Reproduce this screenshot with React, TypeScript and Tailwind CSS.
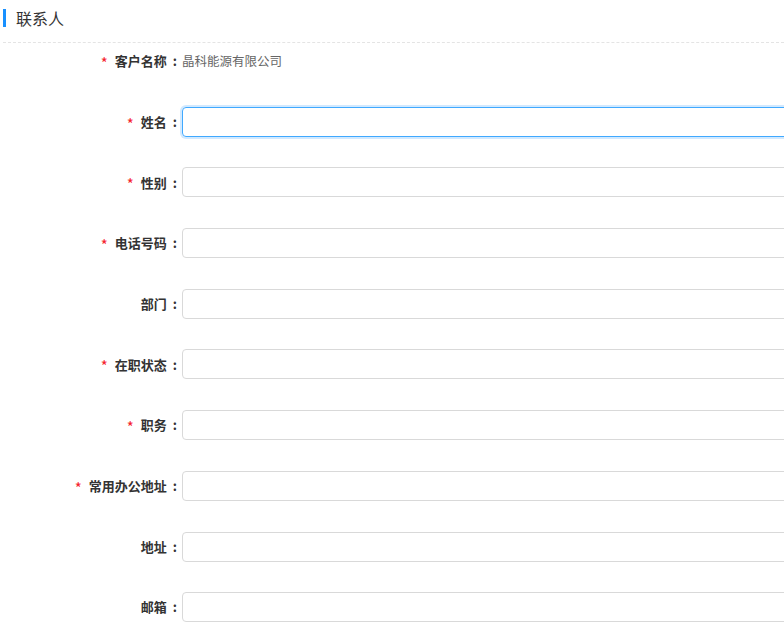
const fields = [
  { label: "姓名", required: true, focused: true },
  { label: "性别", required: true },
  { label: "电话号码", required: true },
  { label: "部门", required: false },
  { label: "在职状态", required: true },
  { label: "职务", required: true },
  { label: "常用办公地址", required: true },
  { label: "地址", required: false },
  { label: "邮箱", required: false },
];

function Label({ text, required }: { text: string; required?: boolean }) {
  return (
    <div className="w-[182px] shrink-0 flex items-center justify-end text-[13px] font-bold text-[#333]">
      {required && (
        <span className="text-[#f5222d] text-[15px] font-normal mr-[7px] leading-none pt-[3px]">*</span>
      )}
      <span>{text}</span>
      <span className="ml-[6px] mr-[5px]">:</span>
    </div>
  );
}

export default function App() {
  return (
    <div
      className="w-[784px] h-[625px] overflow-hidden bg-white"
      style={{ fontFamily: '"Noto Sans CJK SC", "Noto Sans", sans-serif' }}
    >
      <div className="flex items-center h-[36px] pl-[3px]">
        <span className="w-[3px] h-[18px] bg-[#1890ff]" />
        <span className="ml-[10px] text-[16px] text-[#333]">联系人</span>
      </div>
      <div className="ml-[3px] mt-[6px] border-t border-dashed border-[#e4e4e4]" />

      <div className="flex flex-col gap-[30.7px] pt-[3px]">
        <div className="flex items-center h-[30px]">
          <Label text="客户名称" required />
          <span className="text-[12.5px] text-[#666]">晶科能源有限公司</span>
        </div>
        {fields.map((f) => (
          <div key={f.label} className="flex items-center h-[30px]">
            <Label text={f.label} required={f.required} />
            <input
              className={
                f.focused
                  ? "w-[660px] h-[30px] shrink-0 rounded-[4px] border border-[#40a9ff] shadow-[0_0_0_2px_rgba(24,144,255,0.2)] outline-none px-2 text-[13px]"
                  : "w-[660px] h-[30px] shrink-0 rounded-[4px] border border-[#d9d9d9] outline-none px-2 text-[13px]"
              }
            />
          </div>
        ))}
      </div>
    </div>
  );
}
